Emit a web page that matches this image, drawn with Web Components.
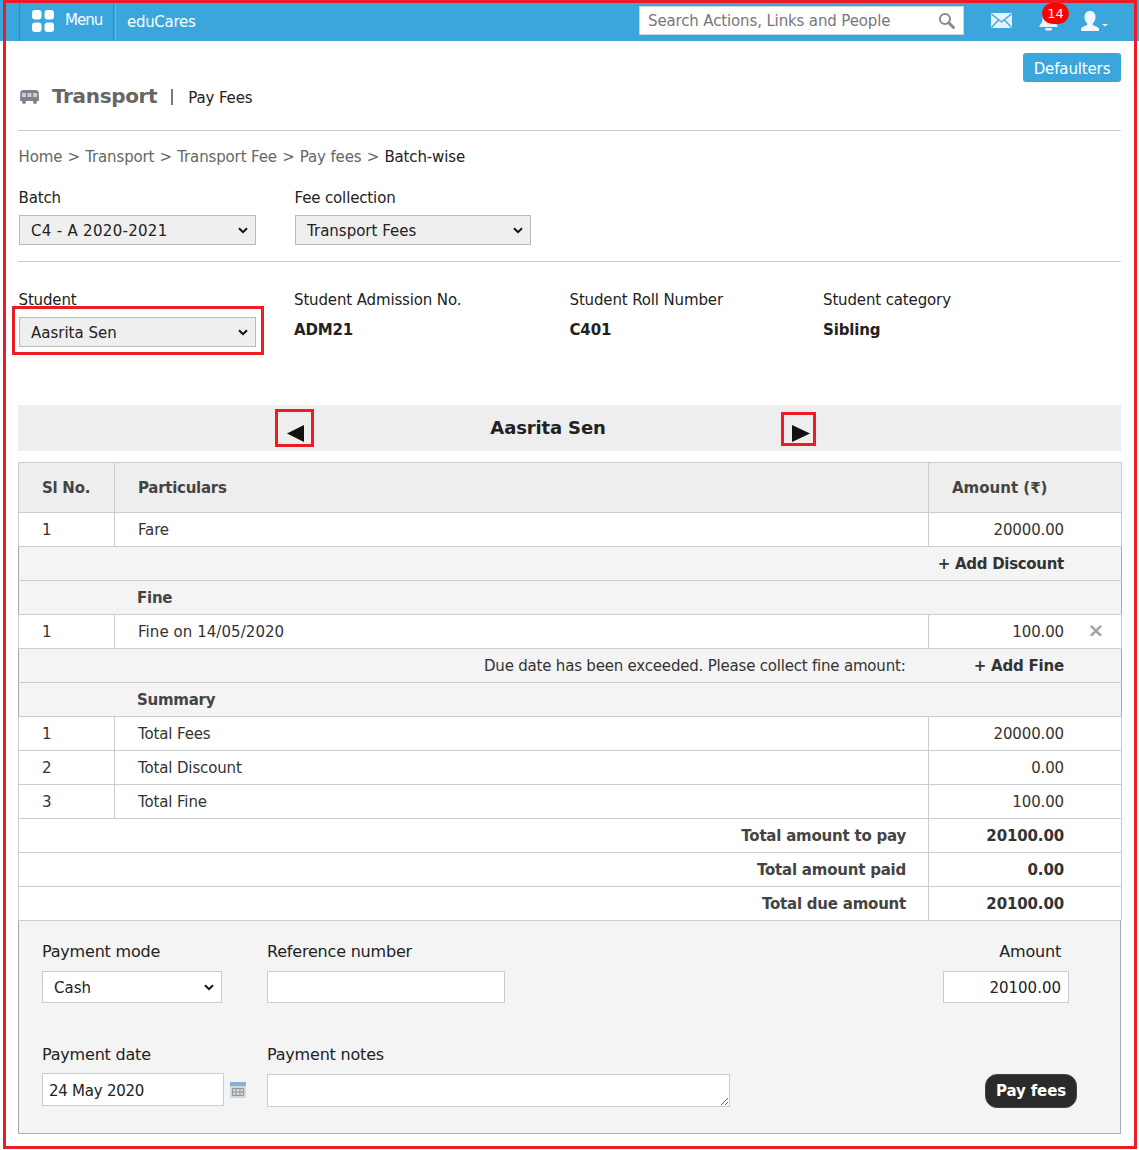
<!DOCTYPE html>
<html lang="en"><head><meta charset="utf-8"><title>Transport Pay Fees</title>
<style>
html,body{margin:0;padding:0;background:#fff}
body{font:15px/20px "DejaVu Sans",Verdana,sans-serif;color:#222;letter-spacing:-.14px}
</style></head><body>
<app-shell>
<top-bar></top-bar>
<page-head></page-head>
<bread-crumb></bread-crumb>
<fee-selectors></fee-selectors>
<student-info></student-info>
<nav-strip></nav-strip>
<fee-table></fee-table>
<payment-panel></payment-panel>
<red-frame></red-frame>
</app-shell>
<script>
const def=(name,css,html)=>customElements.define(name,class extends HTMLElement{
  constructor(){super();this.attachShadow({mode:'open'}).innerHTML=`<style>${css}</style>${html}`;}
});
const chev="url(\"data:image/svg+xml,%3Csvg xmlns='http://www.w3.org/2000/svg' width='10' height='7' viewBox='0 0 10 7'%3E%3Cpath d='M1 1.200 5 5.200 9 1.200' fill='none' stroke='%23111' stroke-width='2'/%3E%3C/svg%3E\")";
const ctl=`select,input,textarea{font:15px "DejaVu Sans",sans-serif;color:#222;box-sizing:border-box;border:1px solid #ccc;border-radius:0;background:#fff;margin:0;display:block;outline:0}
select{appearance:none;-webkit-appearance:none;padding:2px 0 0 11px;background-image:${chev};background-repeat:no-repeat;background-position:right 7px center}`;

def('app-shell',`:host{display:block;position:relative;width:1139px;height:1150px;overflow:hidden}`,`<slot></slot>`);

def('top-bar',`:host{display:flex;align-items:center;height:41px;background:#3aa6dc;color:#fff;box-sizing:border-box}
.menu{display:flex;align-items:center;margin-left:19px;width:95px;height:41px;box-sizing:border-box;border-left:1px solid #2d8dbd;border-right:1px solid #2d8dbd;padding:0 0 2px 12px;gap:11px;font-size:15px;letter-spacing:-.95px}
.menu svg{margin-top:2px}
.brand{margin-left:1px;border-left:1px solid #5fb8e4;height:41px;box-sizing:border-box;padding-top:2px;display:flex;align-items:center;padding-left:11px;font-size:15px;letter-spacing:-.3px}
.search{margin-left:auto;width:325px;height:29px;box-sizing:border-box;background:#fff;border:1px solid #c9d6dd;display:flex;align-items:center;justify-content:space-between;padding:0 8px;color:#777}
.icons{display:flex;align-items:center;margin-left:27px;margin-right:30px;gap:27px}
.user{margin-left:-5px}
.bell{position:relative;display:flex}
.badge{position:absolute;left:3px;top:-8px;min-width:27px;height:21px;border-radius:11px;background:#f00;color:#fff;font-size:13px;line-height:21px;text-align:center}
svg{display:block}`,`
<div class="menu"><svg width="22" height="22" viewBox="0 0 22 22" fill="#fff"><rect x="0" y="0" width="9.5" height="9.5" rx="3"/><rect x="12.5" y="0" width="9.5" height="9.5" rx="3"/><rect x="0" y="12.5" width="9.5" height="9.5" rx="3"/><rect x="12.5" y="12.5" width="9.5" height="9.5" rx="3"/></svg><span>Menu</span></div>
<div class="brand">eduCares</div>
<div class="search"><span>Search Actions, Links and People</span><svg width="17" height="17" viewBox="0 0 17 17" fill="none" stroke="#8a8a8a"><circle cx="7" cy="7" r="5" stroke-width="2"/><path d="M10.8 10.8 15.5 15.5" stroke-width="3" stroke-linecap="round"/></svg></div>
<div class="icons">
<svg width="21" height="15" viewBox="0 0 21 15"><rect width="21" height="15" rx="1" fill="#e4f2fa"/><path d="M.5 1 10.5 9 20.5 1M.5 14.5 7.5 7M20.5 14.5 13.500 7" fill="none" stroke="#3aa6dc" stroke-width="1.300"/></svg>
<div class="bell"><svg width="19" height="20" viewBox="0 0 19 20" fill="#e4f2fa"><path d="M9.500 0C5 0 3.500 4 3.500 8c0 3-1.500 5-3 6.500V16h18v-1.500c-1.500-1.500-3-3.500-3-6.500 0-4-1.500-8-6-8z"/><rect x="6" y="17" width="7" height="2.500" rx="1.200"/></svg><span class="badge">14</span></div>
<svg class="user" width="29" height="20" viewBox="0 0 29 20" fill="#f0f8fc"><path d="M10 0c3.500 0 5.500 2.500 5.500 6 0 3-1.200 5-2.700 6.500v1.500c2.500 1 5.200 2 6.200 3.500V20H1v-2.500C2 16 4.700 15 7.200 14v-1.500C5.700 11 4.500 9 4.500 6c0-3.500 2-6 5.500-6z"/><path d="M22 13h6l-3 2.500z" /></svg>
</div>`);

def('page-head',`:host{display:block;margin:0 18px;height:90px;box-sizing:border-box;border-bottom:1px solid #ccc;padding-top:12px}
.top{display:flex;justify-content:flex-end}
.btn{height:29px;width:98px;box-sizing:border-box;background:#3aa6dc;color:#fff;border-radius:3px;font-size:15px;line-height:33px;text-align:center}
.title{display:flex;align-items:center;margin-top:1px;height:28px}
svg{margin-left:2px}
h1{font:bold 20px/26px "DejaVu Sans",sans-serif;color:#666;margin:0 0 2px 13px;letter-spacing:-.35px}
.sep{width:2px;height:16px;background:#777;margin:0 15px 0 14px}
.sub{font-size:15px;color:#222;padding-top:2px}`,`
<div class="top"><span class="btn">Defaulters</span></div>
<div class="title"><svg width="19" height="14" viewBox="0 0 19 14"><path d="M3 0h13c1.500 0 2.500 1 2.700 2.500L19 11H0l.3-8.500C.5 1 1.500 0 3 0z" fill="#7d828c"/><rect x="2" y="3" width="4" height="4" fill="#c9ccd2"/><rect x="7.500" y="3" width="4" height="4" fill="#c9ccd2"/><rect x="13" y="3" width="4" height="4" fill="#c9ccd2"/><circle cx="4" cy="12" r="2" fill="#7d828c"/><circle cx="15" cy="12" r="2" fill="#7d828c"/></svg><h1>Transport</h1><span class="sep"></span><span class="sub">Pay Fees</span></div>`);

def('bread-crumb',`:host{display:flex;gap:5.25px;margin:16px 18px 0;padding-left:.5px;height:20px;color:#666;font-size:15px;white-space:pre}
b{font-weight:normal;color:#222}`,`<span>Home</span><span>&gt;</span><span>Transport</span><span>&gt;</span><span>Transport Fee</span><span>&gt;</span><span>Pay fees</span><span>&gt;</span><b>Batch-wise</b>`);

def('fee-selectors',`${ctl}:host{display:flex;margin:20px 18px 0;height:75px;border-bottom:1px solid #ccc;box-sizing:border-box}
label{display:block;height:28px;line-height:22px;padding-left:.5px}
select{height:30px;background-color:#efefef;border-color:#bbb}
.a{width:276px}.a select{width:237px;margin-left:1px}
.b select{width:236px;margin-left:1px}`,`
<div class="a"><label>Batch</label><select style="letter-spacing:.3px"><option>C4 - A 2020-2021</option></select></div>
<div class="b"><label>Fee collection</label><select><option>Transport Fees</option></select></div>`);

def('student-info',`${ctl}:host{display:flex;margin:27px 18px 0;height:116px}
label{display:block;height:28px;line-height:22px}
.a label{padding-left:.5px}
b{display:block;line-height:20px;margin-top:3px;color:#222}
select{height:30px;background-color:#efefef;border-color:#bbb;width:237px;margin-left:1px}
.a{width:276px}.b{width:275.500px}.c{width:253.500px}`,`
<div class="a"><label>Student</label><select><option>Aasrita Sen</option></select></div>
<div class="b"><label>Student Admission No.</label><b>ADM21</b></div>
<div class="c"><label>Student Roll Number</label><b>C401</b></div>
<div class="d"><label>Student category</label><b>Sibling</b></div>`);

def('nav-strip',`:host{display:grid;grid-template-columns:258px 40px 1fr 40px 304px;align-items:center;margin:0 18px;height:46px;background:#eee;color:#111}
.t{font-weight:bold;font-size:18px;text-align:center;color:#222;padding-left:3px}
svg{display:block;margin:auto}.l{position:relative;top:5px;left:-1px}.r{position:relative;top:5px;left:4px}`,`
<span></span><svg class="l" width="17" height="17" viewBox="0 0 17 17" role="img" aria-label="Previous"><path d="M17 0V17L0 8.500z" fill="#111"/></svg><div class="t">Aasrita Sen</div><svg class="r" width="18" height="17" viewBox="0 0 18 17" role="img" aria-label="Next"><path d="M0 0V17L18 8.500z" fill="#111"/></svg><span></span>`);

def('fee-table',`:host{display:block;margin:11px 18px 0;color:#333}
table{border-collapse:collapse;table-layout:fixed;width:1103px;font-size:15px}
td,th{border:1px solid #ccc;height:34px;padding:0 0 0 23px;box-sizing:border-box;line-height:20px;font-weight:normal;text-align:left}
table{border:1px solid #aaa}
thead th{height:50px;background:#eee;font-weight:bold;color:#444;letter-spacing:-.27px}
.n{text-align:right;padding:0 57px 0 0}
.alt td{background:#f4f4f4}
.nov td{border-left:0;border-right:0}
b{color:#333;letter-spacing:-.2px}
.sec{padding-left:118px;font-weight:bold;color:#444;letter-spacing:-.25px}
.lab{text-align:right;padding:0 22px 0 0;font-weight:bold;color:#444;letter-spacing:-.22px}
.w{letter-spacing:.06px}
.x{display:inline-block;width:40px;text-align:right;font-size:20px;color:#a3a3a3;font-weight:bold;line-height:18px}`,`
<table><colgroup><col style="width:96px"><col style="width:814px"><col style="width:193px"></colgroup>
<thead><tr><th>Sl No.</th><th>Particulars</th><th style="letter-spacing:0">Amount (₹)</th></tr></thead>
<tbody>
<tr><td>1</td><td>Fare</td><td class="n">20000.00</td></tr>
<tr class="alt nov"><td colspan="3" class="n"><b style="letter-spacing:-.3px">+ Add Discount</b></td></tr>
<tr class="alt nov"><td colspan="3" class="sec">Fine</td></tr>
<tr><td>1</td><td class="w">Fine on 14/05/2020</td><td class="n" style="padding-right:17px">100.00<span class="x">×</span></td></tr>
<tr class="alt nov"><td colspan="2" style="text-align:right;padding-right:23px;letter-spacing:-.2px">Due date has been exceeded. Please collect fine amount:</td><td class="n"><b>+ Add Fine</b></td></tr>
<tr class="alt nov"><td colspan="3" class="sec">Summary</td></tr>
<tr><td>1</td><td>Total Fees</td><td class="n">20000.00</td></tr>
<tr><td>2</td><td>Total Discount</td><td class="n">0.00</td></tr>
<tr><td>3</td><td>Total Fine</td><td class="n">100.00</td></tr>
<tr><td colspan="2" class="lab">Total amount to pay</td><td class="n"><b style="letter-spacing:-.14px">20100.00</b></td></tr>
<tr><td colspan="2" class="lab">Total amount paid</td><td class="n"><b style="letter-spacing:-.14px">0.00</b></td></tr>
<tr><td colspan="2" class="lab">Total due amount</td><td class="n"><b style="letter-spacing:-.14px">20100.00</b></td></tr>
</tbody></table>`);

def('payment-panel',`${ctl}:host{display:block;margin:0 18px;height:213px;box-sizing:border-box;background:#f4f4f4;border:1px solid #aaa;border-top:0;padding:20px 0 0 23px;color:#222;font-size:16px}
.row{display:flex;height:103px}
.f{width:225px}
label{display:block;height:30px;line-height:22px;font-size:16px;color:#222;letter-spacing:-.2px}
.end{margin-left:auto;margin-right:51px;width:126px}
.end label{text-align:right;padding-right:8px}
.r2 .end{margin-right:43px;width:92px;padding-top:30px}
select{width:180px;height:32px}
input{height:32px}
.ref{width:238px}
.amt{width:126px;text-align:right;padding:2px 7px 0}
.date{display:flex;gap:6px;align-items:center}
.date input{width:182px;height:33px;padding:2px 6px 0;margin-top:-1px;letter-spacing:-.25px}
.notes{height:33px;width:463px;resize:both}
.pay{height:34px;border:1px solid #444;background:#2a2a2a;color:#fff;border-radius:12px;font:bold 15px/32px "DejaVu Sans",sans-serif;text-align:center;box-sizing:border-box}`,`
<div class="row"><div class="f"><label>Payment mode</label><select><option>Cash</option></select></div>
<div class="f" style="width:auto"><label>Reference number</label><input class="ref"></div>
<div class="end"><label>Amount</label><input class="amt" value="20100.00"></div></div>
<div class="row r2"><div class="f"><label>Payment date</label><div class="date"><input value="24 May 2020"><svg width="16" height="16" viewBox="0 0 16 16"><rect width="16" height="16" fill="#d3d6da"/><rect width="16" height="4" fill="#7fb2dc"/><path d="M2.500 6.500h11v7h-11zM6 6.500v7M10 6.500v7M2.500 10h11" fill="none" stroke="#9096a0"/></svg></div></div>
<div class="f" style="width:auto"><label>Payment notes</label><textarea class="notes"></textarea></div>
<div class="end"><div class="pay">Pay fees</div></div></div>`);

def('red-frame',`:host{position:absolute;inset:0;pointer-events:none}
div{position:absolute;box-sizing:border-box;border:3px solid #ed1c24}`,`
<div style="left:3px;top:0;width:1134px;height:1149px"></div>
<div style="left:12px;top:306px;width:252px;height:49px"></div>
<div style="left:275px;top:409px;width:39px;height:38px"></div>
<div style="left:781px;top:412px;width:35px;height:34px"></div>`);
</script>
</body></html>
